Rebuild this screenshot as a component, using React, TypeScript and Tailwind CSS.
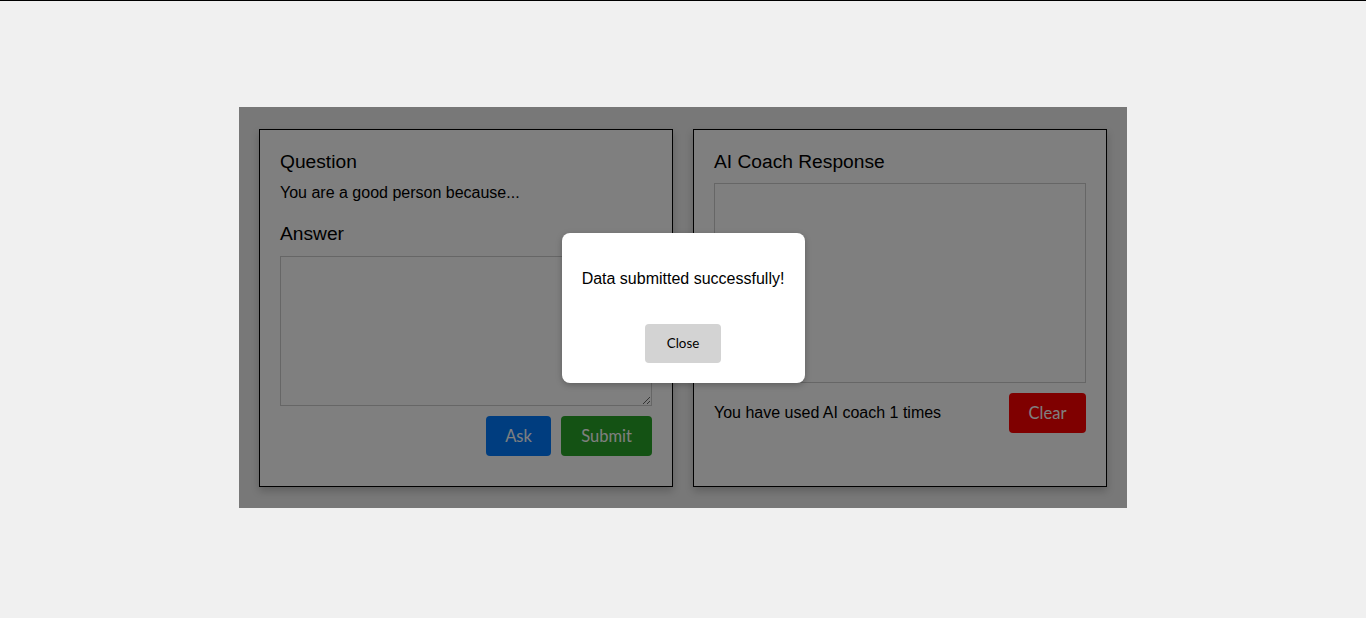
import { FC } from "react";

const Card: FC<{ children: React.ReactNode }> = ({ children }) => (
  <div className="w-[414px] bg-white border border-black p-5 shadow-[0_4px_8px_rgba(0,0,0,0.2)]">
    {children}
  </div>
);

const btn = "h-10 rounded text-white text-[16.5px] font-['Lato',sans-serif]";

const App: FC = () => {
  return (
    <div
      className="min-h-[618px] bg-[#f0f0f0] border-t border-black text-black"
      style={{ fontFamily: '"Liberation Sans", Arial, sans-serif' }}
    >
      <div className="relative mx-auto mt-[106px] w-[888px] flex gap-5 px-5 pt-[22px] pb-[21px]">
        <Card>
          <h3 className="mt-px text-[19.2px] leading-[21.5px]">Question</h3>
          <p className="mt-[11.5px] text-base leading-[18.4px]">
            You are a good person because...
          </p>
          <h3 className="mt-[20.6px] text-[19.2px] leading-[21.5px]">Answer</h3>
          <textarea className="mt-[11.5px] block w-full h-[150px] border border-[#cccccc] bg-white" />
          <div className="mt-[10px] mb-[10px] flex justify-end gap-[10px]">
            <button className={`${btn} w-[65px] bg-[#007bff]`}>Ask</button>
            <button className={`${btn} w-[91px] bg-[#28a428]`}>Submit</button>
          </div>
        </Card>
        <Card>
          <h3 className="mt-px text-[19.2px] leading-[21.5px]">AI Coach Response</h3>
          <div className="mt-[10.5px] h-[200px] border border-[#cccccc]" />
          <div className="mt-[10px] flex items-center justify-between">
            <span className="text-base">You have used AI coach 1 times</span>
            <button className={`${btn} w-[77px] bg-[#ff0000]`}>Clear</button>
          </div>
        </Card>

        <div className="absolute inset-0 bg-black/50 flex items-center justify-center">
          <div className="w-[243px] h-[150px] bg-white rounded-lg p-5 flex flex-col items-center shadow-[0_2px_6px_rgba(0,0,0,0.25)]">
            <p className="mt-[17px] text-base leading-[18.4px]">Data submitted successfully!</p>
            <button className="mt-[36px] w-[76px] h-[39px] pt-[2px] rounded bg-[#d3d3d3] text-[13.33px] font-['Lato',sans-serif]">
              Close
            </button>
          </div>
        </div>
      </div>
    </div>
  );
};

export default App;
